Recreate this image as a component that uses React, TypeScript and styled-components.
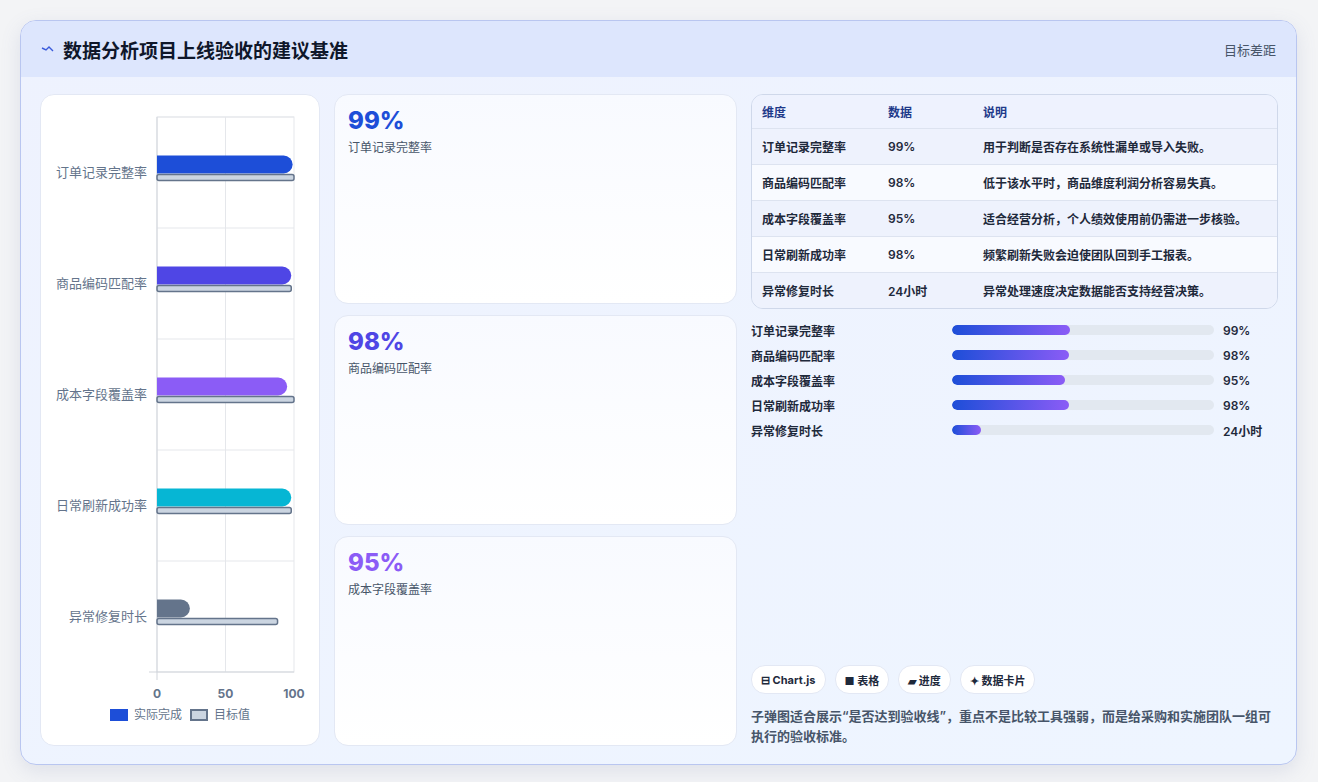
import React from "react";
import styled, { createGlobalStyle } from "styled-components";

const Global = createGlobalStyle`
  body { margin: 0; background: #f3f4f6; font-family: Inter, "Noto Sans CJK SC", sans-serif; }
`;

const Page = styled.div`
  width: 1318px;
  height: 782px;
  padding: 20px 21px 19px 20px;
  box-sizing: border-box;
`;

const Card = styled.div`
  height: 100%;
  border: 1px solid #b9c6f0;
  border-radius: 16px;
  background: linear-gradient(160deg, #eef2fe, #eef5ff);
  overflow: hidden;
  display: flex;
  flex-direction: column;
  box-shadow: 0 6px 20px rgba(100, 116, 160, 0.15);
`;

const Header = styled.div`
  height: 56px;
  background: #dde6fd;
  display: flex;
  align-items: center;
  justify-content: space-between;
  padding: 0 20px 0 20px;
`;

const Title = styled.h1`
  margin: 0;
  font-size: 19px;
  font-weight: 700;
  color: #0f172a;
  display: flex;
  align-items: center;
  gap: 9px;
`;

const HeaderLink = styled.span`
  font-size: 13px;
  color: #475569;
`;

const Body = styled.div`
  flex: 1;
  display: grid;
  grid-template-columns: 280px 403px 1fr;
  gap: 14px;
  padding: 17px 18px 18px 19px;
  min-height: 0;
`;

const Panel = styled.div`
  background: #fff;
  border: 1px solid #e3e8f4;
  border-radius: 14px;
`;

const ChartPanel = styled(Panel)`
  display: flex;
  flex-direction: column;
  align-items: center;
  padding-bottom: 18px;
`;

const Legend = styled.div`
  display: flex;
  gap: 8px;
  font-size: 12px;
  color: #64748b;
  align-items: center;
`;

const Swatch = styled.span<{ $outline?: boolean }>`
  display: inline-block;
  width: 18px;
  height: 12px;
  margin-right: 6px;
  vertical-align: -2px;
  background: ${(p) => (p.$outline ? "#cbd5e1" : "#1d4ed8")};
  border: ${(p) => (p.$outline ? "2px solid #64748b" : "none")};
  box-sizing: border-box;
`;

const Stack = styled.div`
  display: grid;
  grid-template-rows: repeat(3, 1fr);
  gap: 11px;
`;

const StatCard = styled(Panel)`
  background: linear-gradient(180deg, #f8faff, #ffffff);
  padding: 12px 13px;
`;

const StatValue = styled.div<{ $color: string }>`
  font-size: 24px;
  font-weight: 800;
  color: ${(p) => p.$color};
  line-height: 1.2;
`;

const StatLabel = styled.div`
  font-size: 12px;
  color: #475569;
  margin-top: 2px;
`;

const Right = styled.div`
  display: flex;
  flex-direction: column;
  min-width: 0;
`;

const Table = styled.div`
  border: 1px solid #cfd8ea;
  border-radius: 12px;
  overflow: hidden;
  font-size: 12px;
  color: #1e293b;
`;

const TRow = styled.div<{ $head?: boolean; $alt?: boolean }>`
  display: grid;
  grid-template-columns: 126px 95px 1fr;
  height: ${(p) => (p.$head ? 33 : 35)}px;
  align-items: center;
  padding-left: 10px;
  background: ${(p) => (p.$head ? "#eef2fe" : p.$alt ? "#f8faff" : "#eef2fd")};
  color: ${(p) => (p.$head ? "#1e3a8a" : "#1e293b")};
  font-weight: 600;
  border-top: ${(p) => (p.$head ? "none" : "1px solid #dde3f0")};
`;

const Bars = styled.div`
  margin-top: 12px;
  display: flex;
  flex-direction: column;
  gap: 7px;
`;

const BarRow = styled.div`
  display: grid;
  grid-template-columns: 192px 262px 1fr;
  gap: 0 9px;
  align-items: center;
  font-size: 12px;
  font-weight: 600;
  color: #1e293b;
  height: 18px;
  & > span:first-child { margin-right: -9px; }
`;

const Track = styled.div`
  height: 10px;
  border-radius: 5px;
  background: #e2e8f0;
  overflow: hidden;
`;

const Fill = styled.div`
  height: 100%;
  border-radius: 5px;
  background: linear-gradient(90deg, #1d4ed8, #8b5cf6);
`;

const Chips = styled.div`
  margin-top: auto;
  display: flex;
  gap: 9px;
`;

const Chip = styled.span`
  background: #fff;
  border: 1px solid #e3e8f4;
  border-radius: 14px;
  padding: 0 9px;
  height: 27px;
  display: inline-flex;
  align-items: center;
  gap: 4px;
  font-size: 11px;
  font-weight: 700;
  color: #1e293b;
`;

const Note = styled.p`
  margin: 12px 0 0;
  font-size: 13px;
  line-height: 20px;
  color: #475569;
  font-weight: 600;
`;

const rows = [
  { name: "订单记录完整率", v: "99%", a: 99, t: 100, c: "#1d4ed8", d: "用于判断是否存在系统性漏单或导入失败。", w: 118 },
  { name: "商品编码匹配率", v: "98%", a: 98, t: 98, c: "#4f46e5", d: "低于该水平时，商品维度利润分析容易失真。", w: 117 },
  { name: "成本字段覆盖率", v: "95%", a: 95, t: 100, c: "#8b5cf6", d: "适合经营分析，个人绩效使用前仍需进一步核验。", w: 113 },
  { name: "日常刷新成功率", v: "98%", a: 98, t: 98, c: "#06b6d4", d: "频繁刷新失败会迫使团队回到手工报表。", w: 117 },
  { name: "异常修复时长", v: "24小时", a: 24, t: 88, c: "#64748b", d: "异常处理速度决定数据能否支持经营决策。", w: 29 },
];

function Chart() {
  const x0 = 117, w = 137, top = 22, rh = 111;
  return (
    <svg width="280" height="610" viewBox="0 0 280 610">
      <rect x={x0} y={top} width={w} height={rh * 5} fill="none" stroke="#e5e7eb" />
      {[0, 1, 2, 3, 4].map((i) => (
        <line key={i} x1={x0} x2={x0 + w} y1={top + rh * i} y2={top + rh * i} stroke="#e5e7eb" />
      ))}
      <line x1={x0 + w / 2} x2={x0 + w / 2} y1={top} y2={top + rh * 5} stroke="#e5e7eb" />
      <line x1={x0} x2={x0} y1={top} y2={top + rh * 5 + 8} stroke="#d1d5db" />
      <line x1={x0 - 8} x2={x0 + w} y1={top + rh * 5} y2={top + rh * 5} stroke="#d1d5db" />
      {rows.map((r, i) => {
        const cy = top + rh * i + rh / 2;
        const aw = (r.a / 100) * w;
        const tw = (r.t / 100) * w;
        return (
          <g key={r.name}>
            <text x={x0 - 10} y={cy + 4} textAnchor="end" fontSize="13" fill="#64748b">{r.name}</text>
            <path d={`M${x0} ${cy - 17} H${x0 + aw - 9} a9 9 0 0 1 0 18 H${x0} Z`} fill={r.c} />
            <rect x={x0} y={cy + 2} width={tw} height={6} rx="2" fill="#cbd5e1" stroke="#64748b" strokeWidth="1.5" />
          </g>
        );
      })}
      {[0, 50, 100].map((n, i) => (
        <text key={n} x={x0 + (w / 2) * i} y={top + rh * 5 + 26} textAnchor="middle" fontSize="12" fontWeight="700" fill="#64748b">{n}</text>
      ))}
    </svg>
  );
}

export default function App() {
  return (
    <Page>
      <Global />
      <Card>
        <Header>
          <Title>
            <svg width="13" height="8" viewBox="0 0 13 8"><path d="M1 3 L5 5 L8 2 L12 6" stroke="#3b5bdb" strokeWidth="1.4" fill="none" /></svg>
            数据分析项目上线验收的建议基准
          </Title>
          <HeaderLink>目标差距</HeaderLink>
        </Header>
        <Body>
          <ChartPanel>
            <Chart />
            <Legend>
              <span><Swatch />实际完成</span>
              <span><Swatch $outline />目标值</span>
            </Legend>
          </ChartPanel>
          <Stack>
            {rows.slice(0, 3).map((r) => (
              <StatCard key={r.name}>
                <StatValue $color={r.c}>{r.v}</StatValue>
                <StatLabel>{r.name}</StatLabel>
              </StatCard>
            ))}
          </Stack>
          <Right>
            <Table>
              <TRow $head><span>维度</span><span>数据</span><span>说明</span></TRow>
              {rows.map((r, i) => (
                <TRow key={r.name} $alt={i % 2 === 1}>
                  <span>{r.name}</span><span>{r.v}</span><span>{r.d}</span>
                </TRow>
              ))}
            </Table>
            <Bars>
              {rows.map((r) => (
                <BarRow key={r.name}>
                  <span>{r.name}</span>
                  <Track><Fill style={{ width: r.w }} /></Track>
                  <span>{r.v}</span>
                </BarRow>
              ))}
            </Bars>
            <Chips>
              <Chip>⊟ Chart.js</Chip>
              <Chip>■ 表格</Chip>
              <Chip>▰ 进度</Chip>
              <Chip>✦ 数据卡片</Chip>
            </Chips>
            <Note>子弹图适合展示“是否达到验收线”，重点不是比较工具强弱，而是给采购和实施团队一组可执行的验收标准。</Note>
          </Right>
        </Body>
      </Card>
    </Page>
  );
}
